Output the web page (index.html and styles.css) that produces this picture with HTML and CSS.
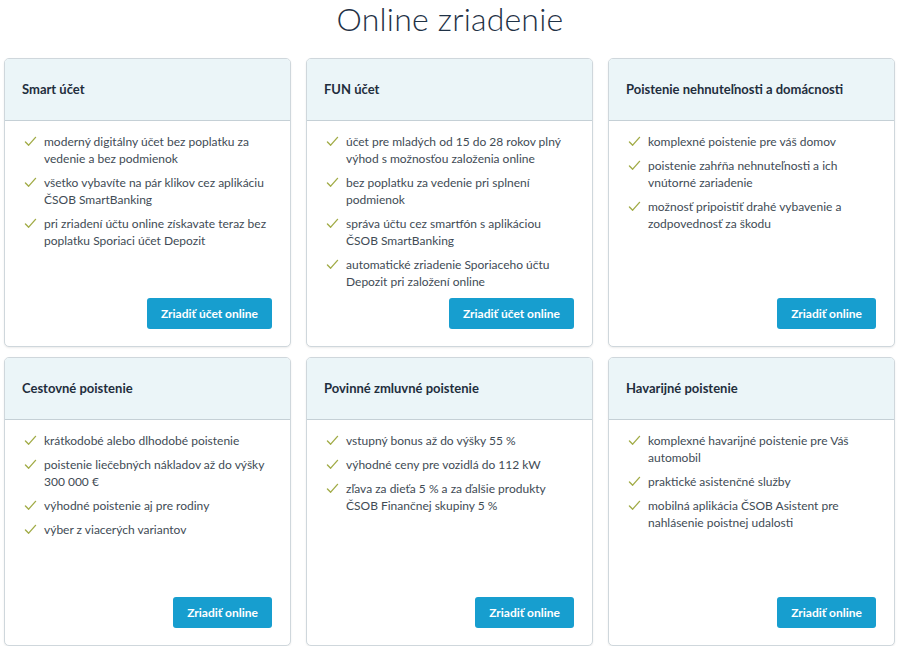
FILE: index.html
```html
<!DOCTYPE html>
<html lang="sk">
<head>
<meta charset="utf-8">
<title>Online zriadenie</title>
<link rel="stylesheet" href="styles.css">
</head>
<body>
<h1 class="page-title">Online zriadenie</h1>
<div class="grid">
  <div class="card">
    <div class="card-head">Smart účet</div>
    <div class="card-body">
      <ul class="list">
        <li><svg class="check" viewBox="0 0 14 12"><polyline points="1.5,6.5 5,10 12.5,1.5"/></svg><span>moderný digitálny účet bez poplatku za vedenie a bez podmienok</span></li>
        <li><svg class="check" viewBox="0 0 14 12"><polyline points="1.5,6.5 5,10 12.5,1.5"/></svg><span>všetko vybavíte na pár klikov cez aplikáciu ČSOB SmartBanking</span></li>
        <li><svg class="check" viewBox="0 0 14 12"><polyline points="1.5,6.5 5,10 12.5,1.5"/></svg><span>pri zriadení účtu online získavate teraz bez poplatku Sporiaci účet Depozit</span></li>
      </ul>
      <div class="actions"><a class="btn">Zriadiť účet online</a></div>
    </div>
  </div>
  <div class="card">
    <div class="card-head">FUN účet</div>
    <div class="card-body">
      <ul class="list">
        <li><svg class="check" viewBox="0 0 14 12"><polyline points="1.5,6.5 5,10 12.5,1.5"/></svg><span>účet pre mladých od 15 do 28 rokov plný výhod s možnosťou založenia online</span></li>
        <li><svg class="check" viewBox="0 0 14 12"><polyline points="1.5,6.5 5,10 12.5,1.5"/></svg><span>bez poplatku za vedenie pri splnení podmienok</span></li>
        <li><svg class="check" viewBox="0 0 14 12"><polyline points="1.5,6.5 5,10 12.5,1.5"/></svg><span>správa účtu cez smartfón s aplikáciou ČSOB SmartBanking</span></li>
        <li><svg class="check" viewBox="0 0 14 12"><polyline points="1.5,6.5 5,10 12.5,1.5"/></svg><span>automatické zriadenie Sporiaceho účtu Depozit pri založení online</span></li>
      </ul>
      <div class="actions"><a class="btn">Zriadiť účet online</a></div>
    </div>
  </div>
  <div class="card">
    <div class="card-head">Poistenie nehnuteľnosti a domácnosti</div>
    <div class="card-body">
      <ul class="list">
        <li><svg class="check" viewBox="0 0 14 12"><polyline points="1.5,6.5 5,10 12.5,1.5"/></svg><span>komplexné poistenie pre váš domov</span></li>
        <li><svg class="check" viewBox="0 0 14 12"><polyline points="1.5,6.5 5,10 12.5,1.5"/></svg><span>poistenie zahŕňa nehnuteľnosti a ich vnútorné zariadenie</span></li>
        <li><svg class="check" viewBox="0 0 14 12"><polyline points="1.5,6.5 5,10 12.5,1.5"/></svg><span>možnosť pripoistiť drahé vybavenie a zodpovednosť za škodu</span></li>
      </ul>
      <div class="actions"><a class="btn">Zriadiť online</a></div>
    </div>
  </div>
  <div class="card">
    <div class="card-head">Cestovné poistenie</div>
    <div class="card-body">
      <ul class="list">
        <li><svg class="check" viewBox="0 0 14 12"><polyline points="1.5,6.5 5,10 12.5,1.5"/></svg><span>krátkodobé alebo dlhodobé poistenie</span></li>
        <li><svg class="check" viewBox="0 0 14 12"><polyline points="1.5,6.5 5,10 12.5,1.5"/></svg><span>poistenie liečebných nákladov až do výšky 300 000 €</span></li>
        <li><svg class="check" viewBox="0 0 14 12"><polyline points="1.5,6.5 5,10 12.5,1.5"/></svg><span>výhodné poistenie aj pre rodiny</span></li>
        <li><svg class="check" viewBox="0 0 14 12"><polyline points="1.5,6.5 5,10 12.5,1.5"/></svg><span>výber z viacerých variantov</span></li>
      </ul>
      <div class="actions"><a class="btn">Zriadiť online</a></div>
    </div>
  </div>
  <div class="card">
    <div class="card-head">Povinné zmluvné poistenie</div>
    <div class="card-body">
      <ul class="list">
        <li><svg class="check" viewBox="0 0 14 12"><polyline points="1.5,6.5 5,10 12.5,1.5"/></svg><span>vstupný bonus až do výšky 55 %</span></li>
        <li><svg class="check" viewBox="0 0 14 12"><polyline points="1.5,6.5 5,10 12.5,1.5"/></svg><span>výhodné ceny pre vozidlá do 112 kW</span></li>
        <li><svg class="check" viewBox="0 0 14 12"><polyline points="1.5,6.5 5,10 12.5,1.5"/></svg><span>zľava za dieťa 5 % a za ďalšie produkty ČSOB Finančnej skupiny 5 %</span></li>
      </ul>
      <div class="actions"><a class="btn">Zriadiť online</a></div>
    </div>
  </div>
  <div class="card">
    <div class="card-head">Havarijné poistenie</div>
    <div class="card-body">
      <ul class="list">
        <li><svg class="check" viewBox="0 0 14 12"><polyline points="1.5,6.5 5,10 12.5,1.5"/></svg><span>komplexné havarijné poistenie pre Váš automobil</span></li>
        <li><svg class="check" viewBox="0 0 14 12"><polyline points="1.5,6.5 5,10 12.5,1.5"/></svg><span>praktické asistenčné služby</span></li>
        <li><svg class="check" viewBox="0 0 14 12"><polyline points="1.5,6.5 5,10 12.5,1.5"/></svg><span>mobilná aplikácia ČSOB Asistent pre nahlásenie poistnej udalosti</span></li>
      </ul>
      <div class="actions"><a class="btn">Zriadiť online</a></div>
    </div>
  </div>
</div>
</body>
</html>
```
FILE: styles.css
```css
* { box-sizing: border-box; }
html, body { margin: 0; padding: 0; background: #ffffff; }
body {
  font-family: "Lato", "Open Sans", sans-serif;
  color: #414b55;
}
.page-title {
  margin: 0;
  padding-top: 0;
  height: 58px;
  text-align: center;
  font-size: 32px;
  font-weight: 300;
  line-height: 38px;
  color: #1f3246;
  letter-spacing: 0.2px;
}
.grid {
  display: grid;
  grid-template-columns: repeat(3, 287px);
  grid-auto-rows: 289px;
  column-gap: 15px;
  row-gap: 10px;
  padding: 0 0 0 4px;
}
.card {
  display: flex;
  flex-direction: column;
  border: 1px solid #cfd7dc;
  border-radius: 5px;
  background: #fff;
  overflow: hidden;
  box-shadow: 0 1px 2px rgba(0, 0, 0, 0.08);
}
.card-head {
  height: 62px;
  flex: none;
  display: flex;
  align-items: center;
  padding: 0 17px 2px;
  background: #ebf5f8;
  border-bottom: 1px solid #c5d0d6;
  font-size: 13px;
  font-weight: 700;
  color: #1f2e3d;
}
.card-body {
  flex: 1;
  display: flex;
  flex-direction: column;
  padding: 12px 18px 17px 19px;
}
.list {
  list-style: none;
  margin: 0;
  padding: 0;
  flex: 1;
}
.list li {
  display: flex;
  align-items: flex-start;
  font-size: 12px;
  line-height: 17px;
  margin-bottom: 7px;
}
.check {
  flex: none;
  width: 13px;
  height: 11px;
  margin: 3px 7px 0 0;
  fill: none;
  stroke: #a2ac48;
  stroke-width: 1.5;
  stroke-linecap: round;
  stroke-linejoin: round;
}
.actions {
  display: flex;
  justify-content: flex-end;
}
.btn {
  display: inline-flex;
  align-items: center;
  height: 31px;
  padding: 0 14px;
  background: #179ecf;
  color: #fff;
  border-radius: 3px;
  font-size: 12px;
  font-weight: 700;
  text-decoration: none;
}
```
